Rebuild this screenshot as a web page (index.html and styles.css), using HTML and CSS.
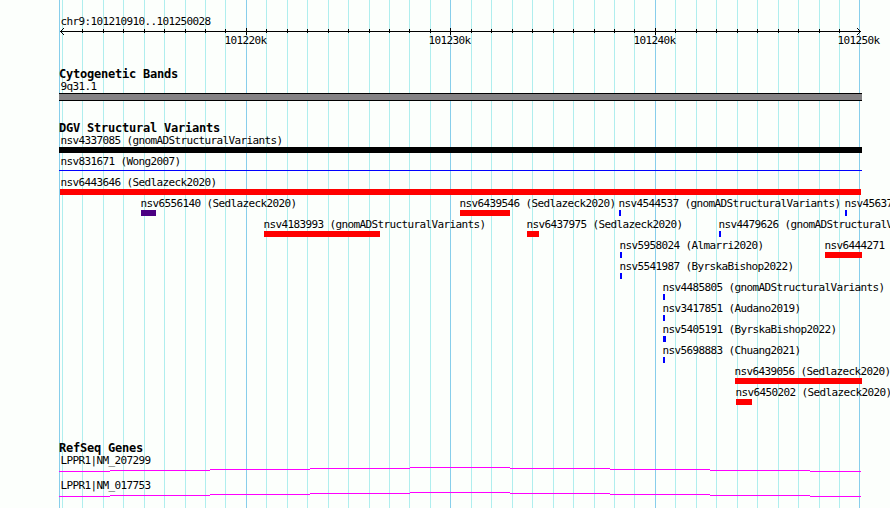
FILE: index.html
```html
<!DOCTYPE html>
<html lang="en">
<head>
    <meta charset="UTF-8">
    <title>chr9:101210910..101250028</title>
    <link rel="stylesheet" href="styles.css">
</head>
<body>
<div class="browser">

    <!-- grid lines, 1k apart -->
    <svg class="grid" width="890" height="508" shape-rendering="crispEdges">
        <path class="minor" d="M62.5 0v508M82.5 0v508M103.5 0v508M123.5 0v508M144.5 0v508M164.5 0v508M185.5 0v508M205.5 0v508M225.5 0v508M266.5 0v508M287.5 0v508M307.5 0v508M328.5 0v508M348.5 0v508M369.5 0v508M389.5 0v508M409.5 0v508M430.5 0v508M471.5 0v508M491.5 0v508M512.5 0v508M532.5 0v508M553.5 0v508M573.5 0v508M594.5 0v508M614.5 0v508M634.5 0v508M675.5 0v508M696.5 0v508M716.5 0v508M737.5 0v508M757.5 0v508M778.5 0v508M798.5 0v508M819.5 0v508M839.5 0v508"/>
        <path class="major" d="M59.5 0v508M246.5 0v508M450.5 0v508M655.5 0v508M859.5 0v508"/>
    </svg>

    <!-- ruler -->
    <div class="track ruler">
        <div class="label">chr9:101210910..101250028</div>
        <svg class="axis" width="890" height="8" shape-rendering="crispEdges">
            <path d="M60 3.5H861"/>
            <path d="M82.5 1v4M103.5 1v4M123.5 1v4M144.5 1v4M164.5 1v4M185.5 1v4M205.5 1v4M225.5 1v4M266.5 1v4M287.5 1v4M307.5 1v4M328.5 1v4M348.5 1v4M369.5 1v4M389.5 1v4M409.5 1v4M430.5 1v4M471.5 1v4M491.5 1v4M512.5 1v4M532.5 1v4M553.5 1v4M573.5 1v4M594.5 1v4M614.5 1v4M634.5 1v4M675.5 1v4M696.5 1v4M716.5 1v4M737.5 1v4M757.5 1v4M778.5 1v4M798.5 1v4M819.5 1v4M839.5 1v4"/>
            <path d="M246.5 0v7M450.5 0v7M655.5 0v7"/>
            <path d="M61 2.5h1M62 1.5h1M63 0.5h1M61 4.5h1M62 5.5h1M63 6.5h1"/>
            <path d="M859 2.5h1M858 1.5h1M857 0.5h1M859 4.5h1M858 5.5h1M857 6.5h1"/>
        </svg>
        <div class="row">
            <span class="name" style="left: 224px">101220k</span>
            <span class="name" style="left: 428px">101230k</span>
            <span class="name" style="left: 633px">101240k</span>
            <span class="name" style="left: 837px">101250k</span>
        </div>
    </div>

    <div class="track bands">
        <h2>Cytogenetic Bands</h2>
        <div class="label">9q31.1</div>
        <div class="band"></div>
    </div>

    <div class="track variants">
        <h2>DGV Structural Variants</h2>
        <div class="row">
            <span class="name" style="left: 60px">nsv4337085 (gnomADStructuralVariants)</span>
            <i class="bar complex" style="left: 59px; width: 803px"></i>
        </div>
        <div class="row">
            <span class="name" style="left: 60px">nsv831671 (Wong2007)</span>
            <i class="bar line" style="left: 59px; width: 803px"></i>
        </div>
        <div class="row">
            <span class="name" style="left: 60px">nsv6443646 (Sedlazeck2020)</span>
            <i class="bar loss" style="left: 60px; width: 801px"></i>
        </div>
        <div class="row">
            <span class="name" style="left: 140px">nsv6556140 (Sedlazeck2020)</span>
            <i class="bar inversion" style="left: 141px; width: 15px"></i>
            <span class="name" style="left: 459px">nsv6439546 (Sedlazeck2020)</span>
            <i class="bar loss" style="left: 460px; width: 50px"></i>
            <span class="name" style="left: 618px">nsv4544537 (gnomADStructuralVariants)</span>
            <i class="bar gain" style="left: 619px; width: 2px"></i>
            <span class="name" style="left: 844px">nsv45637</span>
            <i class="bar gain" style="left: 845px; width: 2px"></i>
        </div>
        <div class="row">
            <span class="name" style="left: 263px">nsv4183993 (gnomADStructuralVariants)</span>
            <i class="bar loss" style="left: 264px; width: 116px"></i>
            <span class="name" style="left: 526px">nsv6437975 (Sedlazeck2020)</span>
            <i class="bar loss" style="left: 527px; width: 12px"></i>
            <span class="name" style="left: 718px">nsv4479626 (gnomADStructuralVariants)</span>
            <i class="bar gain" style="left: 719px; width: 2px"></i>
        </div>
        <div class="row">
            <span class="name" style="left: 619px">nsv5958024 (Almarri2020)</span>
            <i class="bar gain" style="left: 620px; width: 2px"></i>
            <span class="name" style="left: 824px">nsv6444271</span>
            <i class="bar loss" style="left: 825px; width: 37px"></i>
        </div>
        <div class="row">
            <span class="name" style="left: 619px">nsv5541987 (ByrskaBishop2022)</span>
            <i class="bar gain" style="left: 620px; width: 2px"></i>
        </div>
        <div class="row">
            <span class="name" style="left: 662px">nsv4485805 (gnomADStructuralVariants)</span>
            <i class="bar gain" style="left: 663px; width: 2px"></i>
        </div>
        <div class="row">
            <span class="name" style="left: 662px">nsv3417851 (Audano2019)</span>
            <i class="bar gain" style="left: 663px; width: 2px"></i>
        </div>
        <div class="row">
            <span class="name" style="left: 662px">nsv5405191 (ByrskaBishop2022)</span>
            <i class="bar gain" style="left: 663px; width: 3px"></i>
        </div>
        <div class="row">
            <span class="name" style="left: 662px">nsv5698883 (Chuang2021)</span>
            <i class="bar gain" style="left: 663px; width: 2px"></i>
        </div>
        <div class="row">
            <span class="name" style="left: 734px">nsv6439056 (Sedlazeck2020)</span>
            <i class="bar loss" style="left: 735px; width: 127px"></i>
        </div>
        <div class="row">
            <span class="name" style="left: 735px">nsv6450202 (Sedlazeck2020)</span>
            <i class="bar loss" style="left: 736px; width: 16px"></i>
        </div>
    </div>

    <div class="track genes">
        <h2>RefSeq Genes</h2>
        <div class="gene">
            <div class="label">LPPR1|NM_207299</div>
            <svg class="intron" width="890" height="5" shape-rendering="crispEdges">
                <path d="M59 4.5H110M110 3.5H210M210 2.5H310M310 1.5H410M410 0.5H510M510 1.5H610M610 2.5H710M710 3.5H810M810 4.5H861"/>
            </svg>
        </div>
        <div class="gene">
            <div class="label">LPPR1|NM_017753</div>
            <svg class="intron" width="890" height="5" shape-rendering="crispEdges">
                <path d="M59 4.5H110M110 3.5H210M210 2.5H310M310 1.5H410M410 0.5H510M510 1.5H610M610 2.5H710M710 3.5H810M810 4.5H861"/>
            </svg>
        </div>
    </div>

</div>
</body>
</html>
```
FILE: styles.css
```css
body {
    margin: 0;
    background-color: #fcfffc;
    color: #000;
    font-family: "DejaVu Sans Mono", monospace;
    font-size: 11px;
    line-height: 13px;
    letter-spacing: -0.622px;
}
.browser {
    position: relative;
    width: 890px;
    height: 508px;
    overflow: hidden;
}
svg {
    display: block;
    fill: none;
}
.grid {
    position: absolute;
    top: 0;
    left: 0;
}
.minor {
    stroke: #afeeee;
}
.major {
    stroke: #87ceeb;
}
.track {
    position: relative;
}
h2 {
    margin: 0;
    padding-left: 59px;
    height: 12px;
    font-size: 12px;
    font-weight: bold;
    letter-spacing: -0.224px;
}
.label {
    padding-left: 60.4px;
    height: 13px;
    white-space: nowrap;
}

/* ruler */
.ruler {
    padding-top: 15px;
}
.axis {
    stroke: #000;
}
.ruler .row {
    height: 14px;
    margin-top: -2px;
}

/* features */
.row {
    position: relative;
    height: 21px;
}
.name {
    position: absolute;
    top: 0;
    padding-left: 0.4px;
    white-space: nowrap;
}
.bar {
    position: absolute;
    top: 13px;
    height: 6px;
}
.complex {
    background-color: #000;
}
.loss {
    background-color: #f00;
}
.gain {
    background-color: #00f;
}
.inversion {
    background-color: #4b0082;
}
.line {
    top: 15px;
    height: 1px;
    background-color: #00f;
}

/* tracks */
.bands {
    padding-top: 20px;
}
.band {
    box-sizing: border-box;
    width: 803px;
    height: 8px;
    margin-left: 59px;
    border: solid #000;
    border-width: 1px 0;
    background-color: #848284;
}
.variants {
    padding-top: 21px;
}
.genes {
    padding-top: 35px;
}
.gene {
    height: 25px;
}
.intron {
    stroke: #f0f;
}
```
